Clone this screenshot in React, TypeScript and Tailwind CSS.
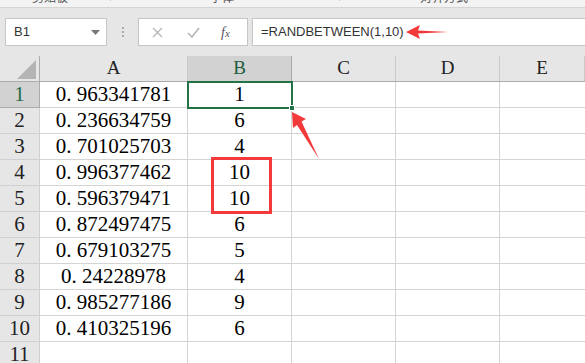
import React from "react"

const colA = [
    "0. 963341781",
    "0. 236634759",
    "0. 701025703",
    "0. 996377462",
    "0. 596379471",
    "0. 872497475",
    "0. 679103275",
    "0. 24228978",
    "0. 985277186",
    "0. 410325196",
    "",
]
const colB = ["1", "6", "4", "10", "10", "6", "5", "4", "9", "6", ""]

const serif = "font-['Liberation_Serif','Noto_Sans_CJK_SC',serif]"

function TopStrip() {
    return (
        <div className="h-[8px] bg-[#f3f3f3] border-b border-[#d5d5d5] overflow-hidden relative text-[12px] text-[#555] font-['Noto_Sans_CJK_SC',sans-serif]">
            <span className="absolute left-[32px] top-[-12px]">剪贴板</span>
            <span className="absolute left-[101px] top-[-8px] w-[4px] h-[4px] border border-[#888]" />
            <span className="absolute left-[110px] top-[-6px] h-[7px] border-l border-[#c8c8c8]" />
            <span className="absolute left-[210px] top-[-12px]">字体</span>
            <span className="absolute left-[330px] top-[-8px] w-[4px] h-[4px] border border-[#888]" />
            <span className="absolute left-[339px] top-[-6px] h-[7px] border-l border-[#c8c8c8]" />
            <span className="absolute left-[420px] top-[-12px]">对齐方式</span>
        </div>
    )
}

function FormulaBar() {
    return (
        <div className="h-[48px] bg-[#e6e6e6] flex items-start pt-[10px] pl-[5px] font-['Liberation_Sans',sans-serif] text-[13px] text-[#333]">
            <div className="w-[102px] h-[28px] bg-white border border-[#c6c6c6] flex items-center pl-[8px] pr-[6px]">
                <span className="flex-1">B1</span>
                <svg width="9" height="5" viewBox="0 0 9 5"><path d="M0 0 H9 L4.5 5 Z" fill="#777" /></svg>
            </div>
            <div className="w-[31px] h-[28px] flex flex-col items-center justify-center gap-[2px]">
                <span className="w-[2px] h-[2px] bg-[#aaa]" />
                <span className="w-[2px] h-[2px] bg-[#aaa]" />
                <span className="w-[2px] h-[2px] bg-[#aaa]" />
            </div>
            <div className="w-[110px] h-[28px] bg-white border border-[#c6c6c6] flex items-center">
                <svg className="ml-[13px]" width="11" height="11" viewBox="0 0 11 11">
                    <path d="M1 1 L10 10 M10 1 L1 10" stroke="#b5b5b5" strokeWidth="1.3" />
                </svg>
                <svg className="ml-[24px]" width="13" height="11" viewBox="0 0 13 11">
                    <path d="M1 6 L5 10 L12 1" stroke="#b5b5b5" strokeWidth="1.6" fill="none" />
                </svg>
                <span className={`ml-[21px] italic text-[14px] text-[#555] ${serif}`}>f<span className="text-[11px]">x</span></span>
            </div>
            <div className="ml-[4px] flex-1 h-[28px] bg-white border border-[#c6c6c6] border-r-0 flex items-center pl-[8px]">
                =RANDBETWEEN(1,10)
            </div>
        </div>
    )
}

function HeaderRow() {
    const cols = [
        { l: "A", w: "w-[148px]", sel: false },
        { l: "B", w: "w-[104px]", sel: true },
        { l: "C", w: "w-[104px]", sel: false },
        { l: "D", w: "w-[104px]", sel: false },
        { l: "E", w: "flex-1", sel: false },
    ]
    return (
        <div className={`flex h-[26px] border-b border-[#ababab] text-[19px] ${serif}`}>
            <div className="w-[40px] bg-[#e6e6e6] border-r border-[#ababab] relative">
                <svg className="absolute left-[17px] top-[4px]" width="20" height="19" viewBox="0 0 20 19">
                    <path d="M19 0 V19 H0 Z" fill="#b4b4b4" />
                </svg>
            </div>
            {cols.map((c) => (
                <div
                    key={c.l}
                    className={`${c.w} flex items-center justify-center border-r ${c.sel ? "bg-[#d2d2d2] text-[#1e5e3c] border-[#ababab]" : "bg-[#e6e6e6] text-[#222] border-[#c9c9c9]"}`}
                >
                    {c.l}
                </div>
            ))}
        </div>
    )
}

function Row({ i }: { i: number }) {
    const n = i + 1
    return (
        <div className={`flex h-[26px] text-[21px] text-black ${serif}`}>
            <div
                className={`w-[40px] flex items-center justify-center border-r border-b ${n === 1 ? "bg-[#d2d2d2] text-[#1e6b45] border-[#ababab]" : "bg-[#e6e6e6] text-[#222] border-[#d0d0d0]"}`}
            >
                {n}
            </div>
            <div className="w-[148px] flex items-center justify-center bg-white border-r border-b border-[#d4d4d4]">{colA[i]}</div>
            <div className="w-[104px] flex items-center justify-center bg-white border-r border-b border-[#d4d4d4]">{colB[i]}</div>
            <div className="w-[104px] bg-white border-r border-b border-[#d4d4d4]" />
            <div className="w-[104px] bg-white border-r border-b border-[#d4d4d4]" />
            <div className="flex-1 bg-white border-b border-[#d4d4d4]" />
        </div>
    )
}

export default function App() {
    return (
        <div className="w-[585px] h-[363px] overflow-hidden relative bg-white">
            <TopStrip />
            <FormulaBar />
            <HeaderRow />
            {colA.map((_, i) => (
                <Row key={i} i={i} />
            ))}

            {/* selection on B1 */}
            <div className="absolute left-[187px] top-[81px] w-[106px] h-[28px] border-2 border-[#217346]" />
            <div className="absolute left-[289px] top-[105px] w-[6px] h-[6px] bg-[#217346] border border-white" />

            {/* red highlight box */}
            <div className="absolute left-[211px] top-[157px] w-[61px] h-[57px] border-[3px] border-[#f23a3a]" />

            {/* arrow next to the formula */}
            <svg className="absolute left-[404px] top-[23px]" width="46" height="18" viewBox="0 0 46 18">
                <path d="M2 9 L16 2 L14 7.5 L44 9 L14 10.5 L16 16 Z" fill="#f23a3a" />
            </svg>

            {/* arrow pointing to fill handle */}
            <svg className="absolute left-[285px] top-[110px]" width="40" height="52" viewBox="0 0 40 52">
                <path d="M7 2 L21 9 L16.5 11.5 L34 49 L12 15 L8 18 Z" fill="#f23a3a" />
            </svg>
        </div>
    )
}
